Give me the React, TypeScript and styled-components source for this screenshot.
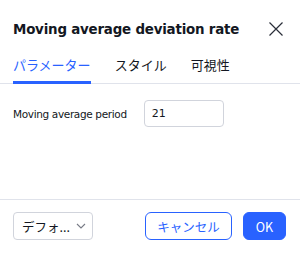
import React from "react";
import styled, { createGlobalStyle } from "styled-components";

const GlobalStyle = createGlobalStyle`
    html, body {
        margin: 0;
        padding: 0;
        background: #ffffff;
    }
    body {
        font-family: "DejaVu Sans", "Noto Sans CJK JP", sans-serif;
        color: #131722;
    }
`;

const tabs = ["パラメーター", "スタイル", "可視性"];

export default function App() {
    return (
        <Dialog>
            <GlobalStyle />
            <Header>
                <Title>Moving average deviation rate</Title>
                <CloseButton aria-label="close">
                    <svg width="16" height="16" viewBox="0 0 16 16">
                        <path d="M1.5 1.5L14.5 14.5M14.5 1.5L1.5 14.5" stroke="#2a2e39" strokeWidth="1.2" fill="none" />
                    </svg>
                </CloseButton>
            </Header>
            <Tabs>
                {tabs.map((t, i) => (
                    <Tab key={t} $active={i === 0}>
                        {t}
                    </Tab>
                ))}
            </Tabs>
            <Body>
                <Row>
                    <Label>Moving average period</Label>
                    <Input defaultValue="21" />
                </Row>
            </Body>
            <Footer>
                <Select>
                    <span>デフォ...</span>
                    <svg width="10" height="6" viewBox="0 0 10 6">
                        <path d="M1 1L5 5L9 1" stroke="#787b86" strokeWidth="1.1" fill="none" />
                    </svg>
                </Select>
                <Actions>
                    <Button>キャンセル</Button>
                    <Button $primary>OK</Button>
                </Actions>
            </Footer>
        </Dialog>
    );
}

const Dialog = styled.div`
    width: 300px;
    height: 253px;
    display: flex;
    flex-direction: column;
    background: #ffffff;
    box-sizing: border-box;
`;

const Header = styled.div`
    display: flex;
    align-items: center;
    justify-content: space-between;
    padding: 16px 16px 0 13px;
    height: 26px;
`;

const Title = styled.div`
    font-family: "DejaVu Sans", sans-serif;
    font-weight: bold;
    font-size: 13.4px;
    letter-spacing: -0.2px;
    color: #131722;
`;

const CloseButton = styled.div`
    width: 16px;
    height: 16px;
    display: flex;
    align-items: center;
    justify-content: center;
`;

const Tabs = styled.div`
    display: flex;
    gap: 24px;
    padding: 0 13px;
    margin-top: 14px;
    border-bottom: 1px solid #e0e3eb;
`;

const Tab = styled.div<{ $active?: boolean }>`
    font-family: "Noto Sans CJK JP", sans-serif;
    font-size: 13px;
    line-height: 18px;
    padding-bottom: 7px;
    color: ${(p) => (p.$active ? "#2962ff" : "#131722")};
    border-bottom: 3px solid ${(p) => (p.$active ? "#2962ff" : "transparent")};
    margin-bottom: -1px;
`;

const Body = styled.div`
    flex: 1;
    padding: 16px 13px;
`;

const Row = styled.div`
    display: flex;
    align-items: center;
    gap: 17px;
`;

const Label = styled.div`
    font-family: "DejaVu Sans", sans-serif;
    font-size: 10.5px;
    letter-spacing: -0.35px;
    color: #131722;
`;

const Input = styled.input`
    width: 80px;
    height: 27px;
    box-sizing: border-box;
    border: 1px solid #d1d4dc;
    border-radius: 4px;
    padding: 0 7px;
    font-family: "DejaVu Sans", sans-serif;
    font-size: 11px;
    color: #131722;
    outline: none;
`;

const Footer = styled.div`
    display: flex;
    align-items: center;
    justify-content: space-between;
    padding: 12px 14px 13px 13px;
    border-top: 1px solid #e0e3eb;
`;

const Select = styled.div`
    width: 80px;
    height: 28px;
    box-sizing: border-box;
    border: 1px solid #d1d4dc;
    border-radius: 4px;
    display: flex;
    align-items: center;
    justify-content: space-between;
    padding: 0 6px 0 8px;
    font-family: "Noto Sans CJK JP", sans-serif;
    font-size: 12.5px;
    color: #131722;
`;

const Actions = styled.div`
    display: flex;
    gap: 11px;
`;

const Button = styled.button<{ $primary?: boolean }>`
    height: 28px;
    box-sizing: border-box;
    border-radius: 6px;
    padding: 0 ${(p) => (p.$primary ? "12px" : "11px")};
    font-family: "Noto Sans CJK JP", "DejaVu Sans", sans-serif;
    font-size: 12.5px;
    border: 1px solid #2962ff;
    background: ${(p) => (p.$primary ? "#2962ff" : "#ffffff")};
    color: ${(p) => (p.$primary ? "#ffffff" : "#2962ff")};
`;
